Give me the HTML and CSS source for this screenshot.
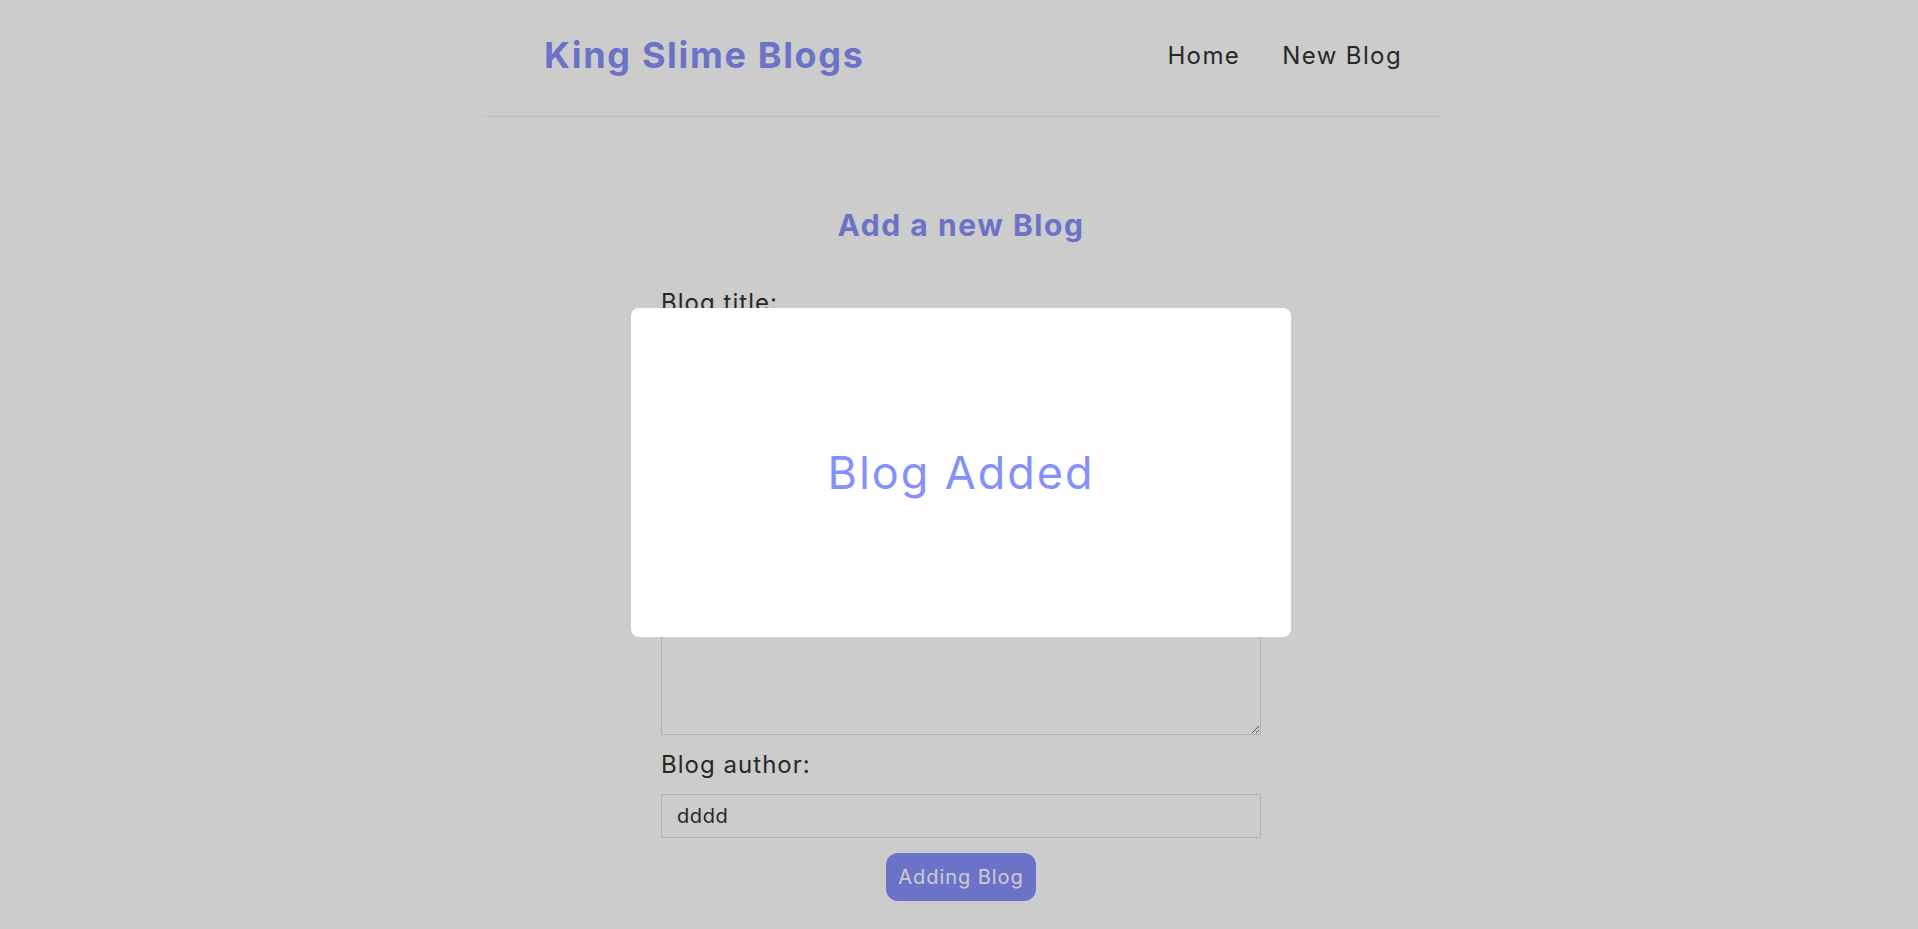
FILE: index.html
```html
<!DOCTYPE html>
<html lang="en">
<head>
<meta charset="utf-8">
<title>King Slime Blogs</title>
<link rel="stylesheet" href="styles.css">
</head>
<body>
<div class="app">
  <nav class="navbar">
    <h1 class="brand">King Slime Blogs</h1>
    <div class="links">
      <a href="#">Home</a>
      <a href="#">New Blog</a>
    </div>
  </nav>
  <div class="content">
    <div class="create">
      <h2 class="create-title">Add a new Blog</h2>
      <form class="create-form">
        <label class="field-label">Blog title:</label>
        <input class="field-input" type="text" value="dddd">
        <label class="field-label">Blog body:</label>
        <textarea class="field-input field-area">dddd</textarea>
        <label class="field-label">Blog author:</label>
        <input class="field-input" type="text" value="dddd">
        <button class="submit-btn" type="button" disabled>Adding Blog</button>
      </form>
    </div>
  </div>
</div>
<div class="overlay">
  <div class="modal">
    <p class="modal-text">Blog Added</p>
  </div>
</div>
</body>
</html>
```

FILE: styles.css
```css
* {
  margin: 0;
}

html, body {
  background: #ffffff;
}

body {
  padding-left: 4px;
  font-family: Inter, "Noto Sans", sans-serif;
  color: #333333;
}

.navbar {
  width: 900px;
  margin: 0 auto;
  padding: 33px 30px 39px;
  display: flex;
  align-items: center;
  border-bottom: 1px solid #f2f2f2;
}

.brand {
  margin-left: 33px;
  font-size: 36px;
  line-height: 44px;
  font-weight: 700;
  letter-spacing: 0.046em;
  color: #8690fb;
}

.links {
  margin-left: auto;
  display: flex;
}

.links a {
  margin-left: 24px;
  padding: 0 9px;
  font-size: 24px;
  line-height: 29px;
  font-weight: 400;
  letter-spacing: 0.058em;
  color: #333333;
  text-decoration: none;
}

.content {
  width: 900px;
  margin: 60px auto 0;
  padding: 30px 30px 0;
}

.create {
  width: 600px;
  margin: 0 auto;
  text-align: center;
}

.create-title {
  margin-bottom: 45px;
  font-size: 30px;
  line-height: 36px;
  font-weight: 700;
  letter-spacing: 0.052em;
  color: #8690fb;
}

.field-label {
  display: block;
  text-align: left;
  font-size: 24px;
  line-height: 29px;
  letter-spacing: 0.043em;
  color: #333333;
}

.field-input {
  display: block;
  width: 100%;
  box-sizing: border-box;
  margin: 15px 0;
  padding: 9px 15px;
  border: 1px solid #dddddd;
  border-radius: 0;
  background: #ffffff;
  font-family: inherit;
  font-size: 20px;
  line-height: 24px;
  letter-spacing: 0.03em;
  color: #333333;
  outline: none;
}

.field-area {
  height: 300px;
  color: transparent;
}

.submit-btn {
  background: #8690fb;
  color: #ffffff;
  border: 0;
  padding: 12px;
  border-radius: 12px;
  font-family: inherit;
  font-size: 20px;
  line-height: 24px;
  letter-spacing: 0.047em;
}

.overlay {
  position: fixed;
  inset: 0;
  box-sizing: border-box;
  padding: 16px 0 0 4px;
  background: rgba(0, 0, 0, 0.2);
  display: flex;
  align-items: center;
  justify-content: center;
}

.modal {
  width: 660px;
  height: 329px;
  background: #ffffff;
  border-radius: 8px;
  display: flex;
  align-items: center;
  justify-content: center;
}

.modal-text {
  font-size: 45px;
  line-height: 54px;
  font-weight: 400;
  letter-spacing: 0.043em;
  color: #8690fb;
}
```
